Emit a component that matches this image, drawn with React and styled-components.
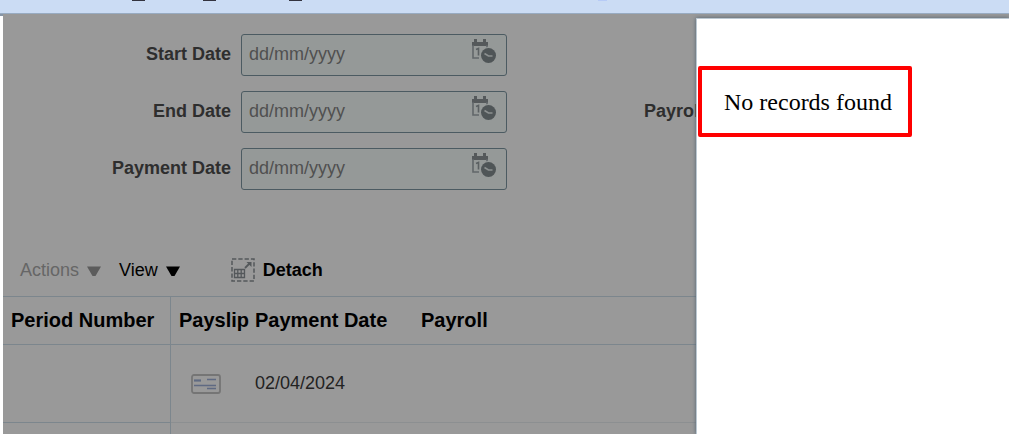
import styled, { createGlobalStyle } from "styled-components";

const GlobalStyle = createGlobalStyle`
  * {
    box-sizing: border-box;
  }
  body {
    margin: 0;
    background: #ffffff;
    font-family: "Liberation Sans", Arial, sans-serif;
    font-size: 18px;
  }
`;

const Page = styled.div`
  height: 100vh;
  display: flex;
  flex-direction: column;
  overflow: hidden;
`;

const TopBar = styled.header`
  flex: none;
  position: relative;
  height: 14px;
  background: #cbdcf4;
  border-bottom: 1px solid #98abc1;
`;

const TabMark = styled.span`
  position: absolute;
  top: 0;
  left: ${(props) => props.$left}px;
  width: ${(props) => props.$width}px;
  height: 1px;
  background: ${(props) => props.$color};
`;

const Body = styled.div`
  flex: 1;
  display: flex;
  min-height: 0;
`;

const Gutter = styled.div`
  flex: none;
  width: 3px;
  border-top: 2px solid #8796a6;
`;

const Workspace = styled.main`
  flex: 1;
  position: relative;
  overflow: hidden;
  background: #999999;
`;

const SearchForm = styled.form`
  display: flex;
  flex-direction: column;
  gap: 15px;
  padding: 20px 0 54px;
`;

const FieldRow = styled.div`
  display: flex;
  align-items: center;
  height: 42px;
`;

const Label = styled.label`
  flex: none;
  width: ${(props) => props.$width}px;
  padding-bottom: 2px;
  line-height: 20px;
  font-weight: bold;
  text-align: right;
  color: #2e2e2e;
`;

const DateBox = styled.div`
  flex: none;
  display: flex;
  width: 266px;
  height: 42px;
  margin-left: 10px;
  padding-right: 9px;
  background: #959998;
  border: 1px solid #4c5b62;
  border-radius: 3px;
`;

const Input = styled.input`
  flex: 1;
  min-width: 0;
  padding: 0 7px 2px;
  border: none;
  outline: none;
  background: transparent;
  font: inherit;
  color: #2e2e2e;
  &::placeholder {
    color: #505050;
    opacity: 1;
  }
`;

const IconButton = styled.button`
  align-self: flex-start;
  width: 26px;
  height: 26px;
  margin-top: 4px;
  padding: 0;
  border: none;
  background: none;
`;

const PayrollInput = styled.input`
  width: 266px;
  height: 42px;
  margin-left: 10px;
  background: #959998;
  border: 1px solid #4c5b62;
  border-radius: 3px;
`;

const Toolbar = styled.div`
  display: flex;
  align-items: center;
  height: 53px;
  padding: 0 17px;
  border-bottom: 1px solid #7c868d;
`;

const ToolButton = styled.button`
  display: flex;
  align-items: center;
  gap: 8px;
  margin-right: ${(props) => props.$after || 0}px;
  padding: 0;
  border: none;
  background: none;
  font: inherit;
  font-weight: ${(props) => (props.$bold ? "bold" : "normal")};
  color: ${(props) => (props.disabled ? "#666666" : "#000000")};
`;

const Table = styled.table`
  width: 100%;
  table-layout: fixed;
  border-collapse: separate;
  border-spacing: 0;
`;

const Th = styled.th`
  width: ${(props) => (props.$width ? `${props.$width}px` : "auto")};
  height: 48px;
  padding: 0 0 0 8px;
  border-bottom: 1px solid #7c868d;
  border-right: ${(props) => (props.$frozen ? "1px solid #7c868d" : "none")};
  font-size: 20px;
  text-align: left;
  white-space: nowrap;
  color: #000000;
`;

const Td = styled.td`
  height: 78px;
  padding: 0 8px;
  border-bottom: 1px solid ${(props) => (props.$frozen ? "#7c868d" : "#8c8f91")};
  border-right: ${(props) => (props.$frozen ? "1px solid #7c868d" : "none")};
  color: #222222;
`;

const PayslipButton = styled.button`
  display: block;
  margin-left: 12px;
  padding: 0;
  border: none;
  background: none;
`;

const Drawer = styled.aside`
  position: absolute;
  top: 4px;
  right: 0;
  bottom: 0;
  width: 313px;
  padding: 47px 1px;
  background: #ffffff;
  border-top: 1px solid #bcc8d2;
  border-left: 1px solid #bcc8d2;
  box-shadow: 0 0 4px #4f6272;
`;

const Notice = styled.div`
  width: 214px;
  padding: 20px 22px 19px;
  border: 4px solid #ff0000;
  border-radius: 2px;
  font-family: "Liberation Serif", "Times New Roman", serif;
  font-size: 24px;
  line-height: 24px;
  white-space: nowrap;
  color: #000000;
`;

const CalendarIcon = () => (
  <svg width="26" height="26" viewBox="0 0 26 26" display="block">
    <path d="M1 3h16v4H1z M3 0h3v4H3z M12 0h3v4h-3z" fill="#55595b" />
    <path d="M2 6v13h6 M16 6v3" fill="none" stroke="#62676a" strokeWidth="1.600" />
    <path d="M5 10.500l2.500-1v7" fill="none" stroke="#5b6062" strokeWidth="1.600" />
    <circle cx="17.500" cy="16.500" r="8.500" fill="#959998" />
    <circle cx="17.500" cy="16.500" r="7.500" fill="#4f5557" />
    <path d="M13.500 14.500l4 2.500h4" fill="none" stroke="#8c9090" strokeWidth="1.600" />
  </svg>
);

const Caret = ({ color }) => (
  <svg width="14" height="12" viewBox="0 0 14 12">
    <path d="M0 2.500h14L8.500 12h-3z" fill={color} />
  </svg>
);

const DetachIcon = () => (
  <svg width="24" height="24" viewBox="0 0 24 24">
    <rect
      x="1"
      y="1"
      width="22"
      height="22"
      fill="none"
      stroke="#54585b"
      strokeWidth="1.500"
      strokeDasharray="4.300 2"
    />
    <path
      d="M3.500 11.500h10v8h-10z M3.500 15.500h10 M6.800 11.500v8 M10.200 11.500v8"
      fill="none"
      stroke="#54585b"
      strokeWidth="1.300"
    />
    <path d="M14 10l5-5" stroke="#54585b" strokeWidth="1.800" />
    <path d="M15.500 4H20.500v5z" fill="#54585b" />
  </svg>
);

const PayslipIcon = () => (
  <svg width="30" height="20" viewBox="0 0 30 20" display="block">
    <rect x="1" y="1" width="28" height="18" rx="2" fill="#999999" stroke="#757575" strokeWidth="1.800" />
    <path d="M3 6.500h7" stroke="#5f6a82" strokeWidth="2.200" />
    <path d="M16 5.500h9 M3 11.500h22 M16 14.500h9" stroke="#5f6a82" strokeWidth="1.500" />
  </svg>
);

const DateField = ({ id, label, children }) => (
  <FieldRow>
    <Label htmlFor={id} $width={228}>
      {label}
    </Label>
    <DateBox>
      <Input id={id} placeholder="dd/mm/yyyy" />
      <IconButton type="button" aria-label={`Select ${label}`}>
        <CalendarIcon />
      </IconButton>
    </DateBox>
    {children}
  </FieldRow>
);

export default function App() {
  return (
    <Page>
      <GlobalStyle />
      <TopBar>
        <TabMark $left={132} $width={13} $color="#33333f" />
        <TabMark $left={203} $width={13} $color="#33333f" />
        <TabMark $left={289} $width={13} $color="#33333f" />
        <TabMark $left={598} $width={9} $color="#b7cbf6" />
      </TopBar>
      <Body>
        <Gutter />
        <Workspace>
          <SearchForm>
            <DateField id="start_date" label="Start Date" />
            <DateField id="end_date" label="End Date">
              <Label htmlFor="payroll" $width={197}>
                Payroll
              </Label>
              <PayrollInput id="payroll" />
            </DateField>
            <DateField id="payment_date" label="Payment Date" />
          </SearchForm>
          <Toolbar>
            <ToolButton disabled $after={18}>
              Actions
              <Caret color="#5c5c5c" />
            </ToolButton>
            <ToolButton $after={51}>
              View
              <Caret color="#000000" />
            </ToolButton>
            <ToolButton $bold>
              <DetachIcon />
              Detach
            </ToolButton>
          </Toolbar>
          <Table>
            <thead>
              <tr>
                <Th $width={168} $frozen>
                  Period Number
                </Th>
                <Th $width={76}>Payslip</Th>
                <Th $width={166}>Payment Date</Th>
                <Th>Payroll</Th>
              </tr>
            </thead>
            <tbody>
              <tr>
                <Td $frozen />
                <Td>
                  <PayslipButton aria-label="Payslip">
                    <PayslipIcon />
                  </PayslipButton>
                </Td>
                <Td>02/04/2024</Td>
                <Td />
              </tr>
              <tr>
                <Td $frozen />
                <Td />
                <Td />
                <Td />
              </tr>
            </tbody>
          </Table>
          <Drawer>
            <Notice>No records found</Notice>
          </Drawer>
        </Workspace>
      </Body>
    </Page>
  );
}
